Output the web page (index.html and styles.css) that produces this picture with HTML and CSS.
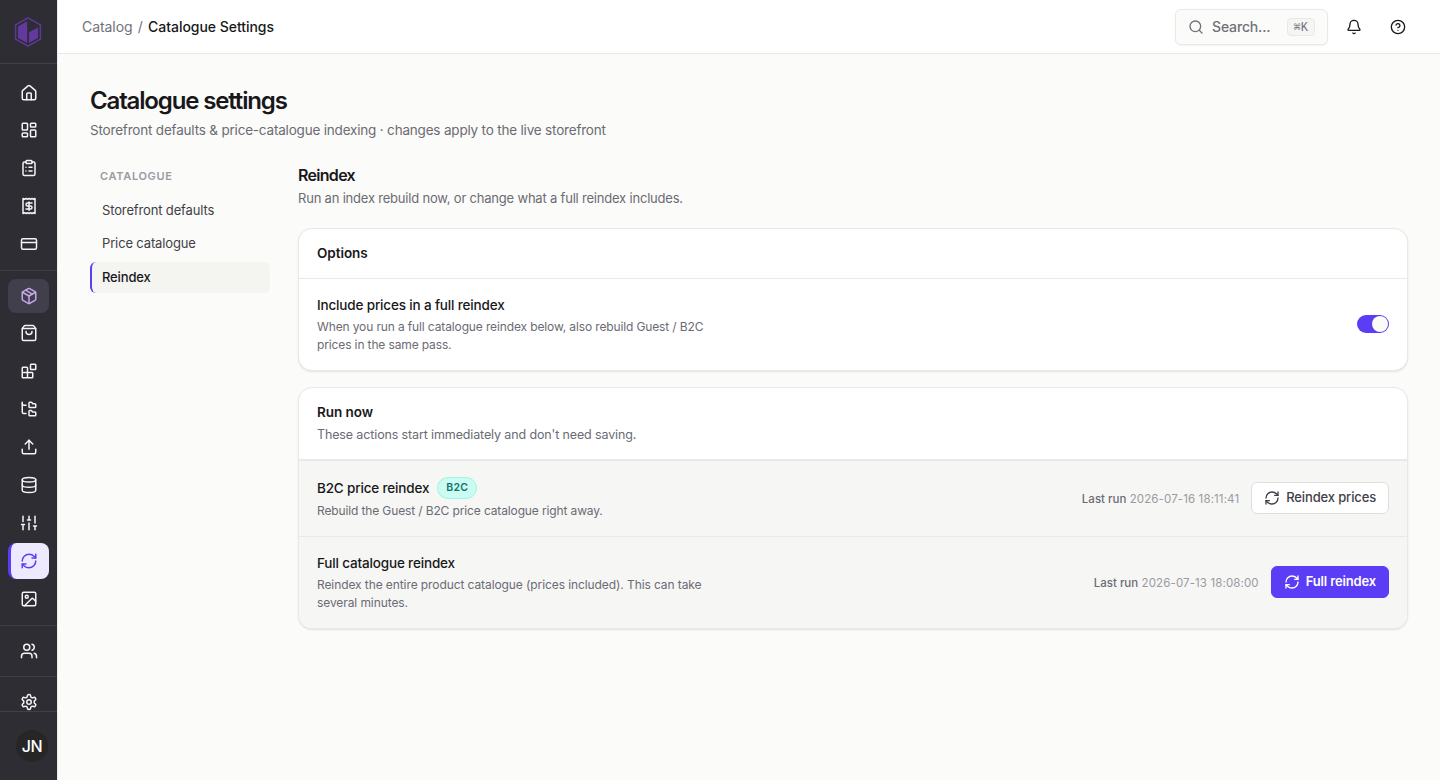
FILE: index.html
```html
<!DOCTYPE html>
<html lang="en">
<head>
  <meta charset="UTF-8">
  <meta name="viewport" content="width=device-width, initial-scale=1.0">
  <title>Catalogue Settings</title>
  <link rel="stylesheet" href="styles.css">
</head>
<body>
  <div class="app">
    <aside class="sidebar">
      <div class="logo">
        <svg width="28" height="32" viewBox="0 0 28 32" fill="none">
          <path d="M14 1.8 26.4 8.9v14.2L14 30.2 1.6 23.1V8.9z" stroke="#5f379b" stroke-width="1.5"/>
          <path d="M13.2 5.2v21.9L4 22V10.4z" fill="#63399f"/>
          <path d="M15 16.2 24 11.6V22l-9 5.1z" fill="#63399f"/>
        </svg>
      </div>
      <nav class="nav">
        <div class="nav-group">
          <a class="nav-item"><svg class="icon" viewBox="0 0 24 24"><path d="M15 21v-8a1 1 0 0 0-1-1h-4a1 1 0 0 0-1 1v8"/><path d="M3 10a2 2 0 0 1 .709-1.528l7-5.999a2 2 0 0 1 2.582 0l7 5.999A2 2 0 0 1 21 10v9a2 2 0 0 1-2 2H5a2 2 0 0 1-2-2z"/></svg></a>
          <a class="nav-item"><svg class="icon" viewBox="0 0 24 24"><rect width="7" height="9" x="3" y="3" rx="1"/><rect width="7" height="5" x="14" y="3" rx="1"/><rect width="7" height="9" x="14" y="12" rx="1"/><rect width="7" height="5" x="3" y="16" rx="1"/></svg></a>
          <a class="nav-item"><svg class="icon" viewBox="0 0 24 24"><rect width="8" height="4" x="8" y="2" rx="1"/><path d="M16 4h2a2 2 0 0 1 2 2v14a2 2 0 0 1-2 2H6a2 2 0 0 1-2-2V6a2 2 0 0 1 2-2h2"/><path d="M12 11h4"/><path d="M12 16h4"/><path d="M8 11h.01"/><path d="M8 16h.01"/></svg></a>
          <a class="nav-item"><svg class="icon" viewBox="0 0 24 24"><path d="M4 2v20l2-1 2 1 2-1 2 1 2-1 2 1 2-1 2 1V2l-2 1-2-1-2 1-2-1-2 1-2-1-2 1Z"/><path d="M16 8h-6a2 2 0 1 0 0 4h4a2 2 0 1 1 0 4H8"/><path d="M12 17.5v-11"/></svg></a>
          <a class="nav-item"><svg class="icon" viewBox="0 0 24 24"><rect width="20" height="14" x="2" y="5" rx="2"/><path d="M2 10h20"/></svg></a>
        </div>
        <div class="nav-group">
          <a class="nav-item open"><svg class="icon" viewBox="0 0 24 24"><path d="M11 21.73a2 2 0 0 0 2 0l7-4A2 2 0 0 0 21 16V8a2 2 0 0 0-1-1.73l-7-4a2 2 0 0 0-2 0l-7 4A2 2 0 0 0 3 8v8a2 2 0 0 0 1 1.73z"/><path d="M12 22V12"/><path d="M3.29 7 12 12l8.71-5"/><path d="m7.5 4.27 9 5.15"/></svg></a>
          <a class="nav-item"><svg class="icon" viewBox="0 0 24 24"><path d="M16 10a4 4 0 0 1-8 0"/><path d="M3.103 6.034h17.794"/><path d="M3.4 5.467a2 2 0 0 0-.4 1.2V20a2 2 0 0 0 2 2h14a2 2 0 0 0 2-2V6.667a2 2 0 0 0-.4-1.2l-2-2.667A2 2 0 0 0 17 2H7a2 2 0 0 0-1.6.8z"/></svg></a>
          <a class="nav-item"><svg class="icon" viewBox="0 0 24 24"><rect width="7" height="7" x="14" y="3" rx="1"/><path d="M10 21V8a1 1 0 0 0-1-1H4a1 1 0 0 0-1 1v12a1 1 0 0 0 1 1h12a1 1 0 0 0 1-1v-5a1 1 0 0 0-1-1H3"/></svg></a>
          <a class="nav-item"><svg class="icon" viewBox="0 0 24 24"><path d="M20 10a1 1 0 0 0 1-1V6a1 1 0 0 0-1-1h-2.5a1 1 0 0 1-.8-.4l-.9-1.2A1 1 0 0 0 15 3h-2a1 1 0 0 0-1 1v5a1 1 0 0 0 1 1Z"/><path d="M20 21a1 1 0 0 0 1-1v-3a1 1 0 0 0-1-1h-2.9a1 1 0 0 1-.88-.55l-.42-.85a1 1 0 0 0-.92-.6H13a1 1 0 0 0-1 1v5a1 1 0 0 0 1 1Z"/><path d="M3 5a2 2 0 0 0 2 2h3"/><path d="M3 3v13a2 2 0 0 0 2 2h3"/></svg></a>
          <a class="nav-item"><svg class="icon" viewBox="0 0 24 24"><path d="M12 3v12"/><path d="m17 8-5-5-5 5"/><path d="M21 15v4a2 2 0 0 1-2 2H5a2 2 0 0 1-2-2v-4"/></svg></a>
          <a class="nav-item"><svg class="icon" viewBox="0 0 24 24"><ellipse cx="12" cy="5" rx="9" ry="3"/><path d="M3 5v14a9 3 0 0 0 18 0V5"/><path d="M3 12a9 3 0 0 0 18 0"/></svg></a>
          <a class="nav-item"><svg class="icon" viewBox="0 0 24 24"><path d="M4 21v-7M4 10V3M12 21v-9M12 8V3M20 21v-5M20 12V3M2 14h4M10 8h4M18 16h4"/></svg></a>
          <a class="nav-item active"><svg class="icon" viewBox="0 0 24 24"><path d="M3 12a9 9 0 0 1 9-9 9.75 9.75 0 0 1 6.74 2.74L21 8"/><path d="M21 3v5h-5"/><path d="M21 12a9 9 0 0 1-9 9 9.75 9.75 0 0 1-6.74-2.74L3 16"/><path d="M8 16H3v5"/></svg></a>
          <a class="nav-item"><svg class="icon" viewBox="0 0 24 24"><rect width="18" height="18" x="3" y="3" rx="2"/><circle cx="9" cy="9" r="2"/><path d="m21 15-3.086-3.086a2 2 0 0 0-2.828 0L6 21"/></svg></a>
        </div>
        <div class="nav-group">
          <a class="nav-item"><svg class="icon" viewBox="0 0 24 24"><path d="M16 21v-2a4 4 0 0 0-4-4H6a4 4 0 0 0-4 4v2"/><circle cx="9" cy="7" r="4"/><path d="M22 21v-2a4 4 0 0 0-3-3.87"/><path d="M16 3.13a4 4 0 0 1 0 7.75"/></svg></a>
        </div>
        <div class="nav-group">
          <a class="nav-item"><svg class="icon" viewBox="0 0 24 24"><path d="M12.22 2h-.44a2 2 0 0 0-2 2v.18a2 2 0 0 1-1 1.73l-.43.25a2 2 0 0 1-2 0l-.15-.08a2 2 0 0 0-2.73.73l-.22.38a2 2 0 0 0 .73 2.73l.15.1a2 2 0 0 1 1 1.72v.51a2 2 0 0 1-1 1.74l-.15.09a2 2 0 0 0-.73 2.73l.22.38a2 2 0 0 0 2.73.73l.15-.08a2 2 0 0 1 2 0l.43.25a2 2 0 0 1 1 1.73V20a2 2 0 0 0 2 2h.44a2 2 0 0 0 2-2v-.18a2 2 0 0 1 1-1.73l.43-.25a2 2 0 0 1 2 0l.15.08a2 2 0 0 0 2.73-.73l.22-.39a2 2 0 0 0-.73-2.73l-.15-.08a2 2 0 0 1-1-1.74v-.5a2 2 0 0 1 1-1.74l.15-.09a2 2 0 0 0 .73-2.73l-.22-.38a2 2 0 0 0-2.73-.73l-.15.08a2 2 0 0 1-2 0l-.43-.25a2 2 0 0 1-1-1.73V4a2 2 0 0 0-2-2z"/><circle cx="12" cy="12" r="3"/></svg></a>
        </div>
      </nav>
      <div class="sidebar-footer">
        <div class="avatar">JN</div>
      </div>
    </aside>

    <div class="main">
      <header class="topbar">
        <div class="breadcrumb">
          <span>Catalog</span>
          <span>/</span>
          <strong>Catalogue Settings</strong>
        </div>
        <div class="topbar-actions">
          <button class="search">
            <svg class="icon" viewBox="0 0 24 24"><circle cx="11" cy="11" r="8"/><path d="m21 21-4.3-4.3"/></svg>
            <span>Search...</span>
            <kbd>⌘K</kbd>
          </button>
          <button class="icon-btn">
            <svg class="icon" viewBox="0 0 24 24"><path d="M10.268 21a2 2 0 0 0 3.464 0"/><path d="M3.262 15.326A1 1 0 0 0 4 17h16a1 1 0 0 0 .74-1.673C19.41 13.956 18 12.499 18 8A6 6 0 0 0 6 8c0 4.499-1.411 5.956-2.738 7.326"/></svg>
          </button>
          <button class="icon-btn">
            <svg class="icon" viewBox="0 0 24 24"><circle cx="12" cy="12" r="10"/><path d="M9.09 9a3 3 0 0 1 5.83 1c0 2-3 3-3 3"/><path d="M12 17h.01"/></svg>
          </button>
        </div>
      </header>

      <main class="content">
        <h1>Catalogue settings</h1>
        <p class="subtitle">Storefront defaults &amp; price-catalogue indexing · changes apply to the live storefront</p>

        <div class="settings">
          <div class="side-menu">
            <div class="side-title">Catalogue</div>
            <a class="side-link">Storefront defaults</a>
            <a class="side-link">Price catalogue</a>
            <a class="side-link current">Reindex</a>
          </div>

          <section class="panel">
            <h2>Reindex</h2>
            <p class="panel-desc">Run an index rebuild now, or change what a full reindex includes.</p>

            <div class="card">
              <div class="card-header">
                <h3>Options</h3>
              </div>
              <div class="row option-row">
                <div class="row-text">
                  <div class="row-title">Include prices in a full reindex</div>
                  <p>When you run a full catalogue reindex below, also rebuild Guest / B2C prices in the same pass.</p>
                </div>
                <div class="toggle"></div>
              </div>
            </div>

            <div class="card">
              <div class="card-header run-header">
                <h3>Run now</h3>
                <p>These actions start immediately and don't need saving.</p>
              </div>
              <div class="actions">
                <div class="row b2c-row">
                  <div class="row-text">
                    <div class="row-title">B2C price reindex <span class="badge">B2C</span></div>
                    <p>Rebuild the Guest / B2C price catalogue right away.</p>
                  </div>
                  <div class="row-side">
                    <span class="last-run"><b>Last run</b> 2026-07-16 18:11:41</span>
                    <button class="btn">
                      <svg class="icon" viewBox="0 0 24 24"><path d="M3 12a9 9 0 0 1 9-9 9.75 9.75 0 0 1 6.74 2.74L21 8"/><path d="M21 3v5h-5"/><path d="M21 12a9 9 0 0 1-9 9 9.75 9.75 0 0 1-6.74-2.74L3 16"/><path d="M8 16H3v5"/></svg>
                      <span>Reindex prices</span>
                    </button>
                  </div>
                </div>
                <div class="row full-row">
                  <div class="row-text">
                    <div class="row-title">Full catalogue reindex</div>
                    <p>Reindex the entire product catalogue (prices included). This can take several minutes.</p>
                  </div>
                  <div class="row-side">
                    <span class="last-run"><b>Last run</b> 2026-07-13 18:08:00</span>
                    <button class="btn btn-primary">
                      <svg class="icon" viewBox="0 0 24 24"><path d="M3 12a9 9 0 0 1 9-9 9.75 9.75 0 0 1 6.74 2.74L21 8"/><path d="M21 3v5h-5"/><path d="M21 12a9 9 0 0 1-9 9 9.75 9.75 0 0 1-6.74-2.74L3 16"/><path d="M8 16H3v5"/></svg>
                      <span>Full reindex</span>
                    </button>
                  </div>
                </div>
              </div>
            </div>
          </section>
        </div>
      </main>
    </div>
  </div>
</body>
</html>
```
FILE: styles.css
```css
* {
  box-sizing: border-box;
}

body {
  margin: 0;
  font-family: Inter, "Liberation Sans", sans-serif;
  font-size: 14px;
  color: #18181b;
  background: #fbfbf9;
}

h1, h2, h3, p {
  margin: 0;
}

button {
  font-family: inherit;
}

.icon {
  width: 18px;
  height: 18px;
  flex-shrink: 0;
  fill: none;
  stroke: currentColor;
  stroke-width: 2;
  stroke-linecap: round;
  stroke-linejoin: round;
}

.app {
  display: flex;
  height: 100vh;
  overflow: hidden;
}

/* sidebar */
.sidebar {
  width: 58px;
  flex-shrink: 0;
  display: flex;
  flex-direction: column;
  background: #2d2d33;
  border-right: 1px solid #ebebee;
}

.logo {
  height: 64px;
  flex-shrink: 0;
  padding: 16px 0 0 14px;
  border-bottom: 1px solid #414147;
}

.nav {
  flex: 1;
  overflow: hidden;
  padding-top: 3.5px;
}

.nav-group {
  display: flex;
  flex-direction: column;
  gap: 3.9px;
  padding: 8px;
}

.nav-group:first-child {
  padding-bottom: 8.9px;
}

.nav-group:nth-child(2) {
  padding-bottom: 9.1px;
}

.nav-group + .nav-group {
  border-top: 1px solid #3e3e44;
}

.nav-item {
  height: 34px;
  display: flex;
  align-items: center;
  justify-content: center;
  border-radius: 8px;
  color: #f4f4f5;
}

.nav-item.open {
  margin-bottom: -0.5px;
  background: #423f4c;
  color: #c4a8e8;
}

.nav-item.active {
  height: 36px;
  margin: -1px 0;
  padding-right: 3px;
  background: #ede9fe;
  border-left: 3px solid #5b3df5;
  color: #5b3df5;
}

.sidebar-footer {
  height: 69px;
  flex-shrink: 0;
  padding: 18px 0 0 16px;
  border-top: 1px solid #414147;
}

.avatar {
  width: 32px;
  height: 32px;
  display: flex;
  align-items: center;
  justify-content: center;
  border-radius: 50%;
  background: #262626;
  color: #fff;
  font-size: 16px;
  font-weight: 500;
  letter-spacing: -0.4px;
}

/* top bar */
.main {
  flex: 1;
  min-width: 0;
}

.topbar {
  height: 54px;
  display: flex;
  align-items: center;
  justify-content: space-between;
  padding: 0 26px 0 24px;
  background: #fff;
  border-bottom: 1px solid #e9e9e7;
}

.breadcrumb {
  display: flex;
  gap: 5.3px;
  letter-spacing: -0.07px;
  color: #71717a;
}

.breadcrumb strong {
  font-weight: 500;
  letter-spacing: -0.04px;
  color: #18181b;
}

.topbar-actions {
  display: flex;
  align-items: center;
  gap: 12px;
}

.search {
  width: 153px;
  height: 36px;
  display: flex;
  align-items: center;
  margin-right: -2px;
  padding: 0 12px;
  border: 1px solid #e9e9e7;
  border-radius: 6px;
  background: #fbfbf9;
  box-shadow: 0 1px 2px rgba(0, 0, 0, 0.05);
  color: #71717a;
  font-size: 14px;
  font-weight: 500;
  letter-spacing: -0.15px;
}

.search .icon {
  width: 16px;
  height: 16px;
  margin-right: 8px;
}

.search kbd {
  height: 18px;
  margin-left: auto;
  padding: 0 6px;
  border: 1px solid #e9e9e7;
  border-radius: 4px;
  background: #f5f5f3;
  font-family: "Liberation Mono", monospace;
  font-size: 12px;
  line-height: 18px;
  letter-spacing: 0;
}

.icon-btn {
  width: 32px;
  height: 32px;
  display: flex;
  align-items: center;
  justify-content: center;
  padding: 0;
  border: 0;
  background: none;
  color: #18181b;
}

.icon-btn .icon {
  width: 16px;
  height: 16px;
}

/* page */
.content {
  padding: 32px;
}

h1 {
  font-size: 24px;
  line-height: 30px;
  font-weight: 600;
  letter-spacing: -1.15px;
}

.subtitle {
  margin-top: 4px;
  font-size: 13.5px;
  line-height: 21px;
  letter-spacing: -0.19px;
  color: #6b6b74;
}

.settings {
  display: grid;
  grid-template-columns: 180px 1fr;
  gap: 28px;
  margin-top: 23px;
}

.side-menu {
  display: flex;
  flex-direction: column;
  gap: 2.5px;
}

.side-title {
  padding: 5px 10px 9px;
  font-size: 11px;
  line-height: 14px;
  font-weight: 600;
  letter-spacing: 0.68px;
  text-transform: uppercase;
  color: #9a9aa2;
}

.side-link {
  height: 31px;
  padding: 0 10px;
  border-left: 2px solid transparent;
  border-radius: 6px;
  font-size: 13px;
  line-height: 31px;
  letter-spacing: -0.14px;
  color: #3f3f46;
}

.side-link.current {
  background: #f4f4f1;
  border-left-color: #5b3df5;
  font-weight: 500;
  color: #18181b;
}

h2 {
  font-size: 16px;
  line-height: 23px;
  font-weight: 600;
  letter-spacing: -0.7px;
}

.panel-desc {
  margin-top: 1px;
  margin-bottom: 20px;
  font-size: 13px;
  line-height: 20px;
  letter-spacing: -0.2px;
  color: #6b6b74;
}

.card {
  margin-bottom: 16px;
  border: 1px solid #e9e9e7;
  border-radius: 14px;
  background: #fff;
  box-shadow: 0 1px 2px rgba(0, 0, 0, 0.1);
  overflow: hidden;
}

.card-header {
  height: 50px;
  padding: 14px 18px;
  border-bottom: 1px solid #e9e9e7;
}

.card-header h3 {
  font-size: 13.5px;
  line-height: 21px;
  font-weight: 600;
  letter-spacing: -0.05px;
}

.run-header {
  height: 72px;
}

.run-header p {
  margin-top: 2px;
  font-size: 12.5px;
  line-height: 19px;
  letter-spacing: -0.13px;
  color: #6b6b74;
}

.row {
  display: flex;
  align-items: center;
  justify-content: space-between;
  padding: 0 18px;
}

.option-row {
  height: 91px;
}

.b2c-row {
  height: 75px;
}

.full-row {
  height: 92px;
  border-top: 1px solid #e9e9e7;
}

.actions {
  border-top: 1px solid #e9e9e7;
  background: #f6f6f4;
}

.row-text {
  max-width: 400px;
}

.row-title {
  display: flex;
  align-items: center;
  gap: 8px;
  font-size: 13.5px;
  line-height: 21px;
  font-weight: 500;
  letter-spacing: -0.16px;
}

.row-text p {
  margin-top: 2px;
  font-size: 12px;
  line-height: 18px;
  letter-spacing: -0.13px;
  color: #6b6b74;
}

.b2c-row .row-text p {
  margin: 3px 0 -1px;
}

.full-row .row-text p {
  letter-spacing: -0.09px;
}

.badge {
  height: 22px;
  margin: -1px 0 0;
  padding: 0 8px;
  border: 1px solid #99f6e4;
  border-radius: 11px;
  background: #ccfbf1;
  color: #0f766e;
  font-size: 10.5px;
  line-height: 20px;
  font-weight: 600;
  letter-spacing: 0.2px;
}

.row-side {
  display: flex;
  align-items: center;
  gap: 12px;
  margin-bottom: 1px;
}

.last-run {
  padding-top: 2px;
  font-size: 11.5px;
  letter-spacing: 0.12px;
  color: #9a9aa2;
}

.last-run b {
  font-weight: 500;
  letter-spacing: 0;
  color: #6b6b74;
}

.toggle {
  width: 32px;
  height: 18px;
  display: flex;
  justify-content: flex-end;
  margin-bottom: 1px;
  padding: 1px;
  border-radius: 9px;
  background: #5b3df5;
}

.toggle::after {
  content: "";
  width: 16px;
  height: 16px;
  border-radius: 50%;
  background: #fbfbf9;
}

.btn {
  height: 32px;
  display: flex;
  align-items: center;
  gap: 6px;
  padding: 0 12px;
  border: 1px solid #dededa;
  border-radius: 6px;
  background: #fff;
  color: #3f3f46;
  font-size: 13px;
  font-weight: 500;
  letter-spacing: -0.14px;
}

.btn .icon {
  width: 16px;
  height: 16px;
}

.btn span {
  padding-bottom: 2px;
}

.btn-primary {
  border-color: #5b3df5;
  background: #5b3df5;
  color: #fff;
  font-weight: 600;
  letter-spacing: -0.15px;
}
```
